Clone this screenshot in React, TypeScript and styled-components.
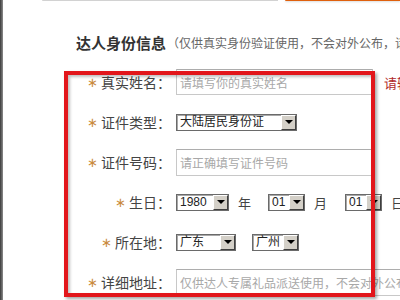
import React from 'react';
import styled, { createGlobalStyle } from 'styled-components';

const Global = createGlobalStyle`
  html, body { margin: 0; padding: 0; background: #fff; }
  body { font-family: "Noto Sans CJK SC", "Noto Sans", sans-serif; }
  #root { width: 400px; height: 300px; overflow: hidden; }
`;

const Page = styled.div`
  position: relative;
  width: 400px;
  height: 300px;
  overflow: hidden;
  display: flex;
  background: #fff;
`;

const LeftEdge = styled.div`
  width: 3px;
  flex: none;
  background: linear-gradient(to right, #3a3a3a, #8c8c8c);
`;

const Main = styled.div`
  flex: 1;
  min-width: 0;
  display: flex;
  flex-direction: column;
`;

const TopBar = styled.div`
  display: flex;
  height: 5px;
  gap: 7px;
  padding-left: 39px;
`;

const GrayTab = styled.div`
  width: 236px;
  box-sizing: border-box;
  background: #eeeeee;
  border-left: 1px solid #dcdcdc;
  border-bottom: 1px solid #d2d2d2;
  border-bottom-left-radius: 4px;
`;

const OrangeTab = styled.div`
  flex: 1;
  background: #df600d;
  border-bottom-left-radius: 6px;
  box-shadow: 0 1px 2px rgba(0, 0, 0, 0.2);
`;

const TitleRow = styled.div`
  margin-top: 31px;
  padding-left: 73px;
  height: 20px;
  display: flex;
  align-items: center;
  white-space: nowrap;
`;

const TitleStrong = styled.span`
  font-size: 15px;
  font-weight: bold;
  color: #333;
`;

const TitleNote = styled.span`
  font-size: 12px;
  color: #666;
  margin-left: 1px;
`;

const Form = styled.div`
  margin-top: 10px;
  display: flex;
  flex-direction: column;
`;

const Row = styled.div`
  height: 40px;
  display: flex;
  align-items: center;
`;

const LabelCell = styled.div`
  width: 168px;
  flex: none;
  display: flex;
  justify-content: flex-end;
  align-items: center;
  font-size: 14px;
  color: #444;
  white-space: nowrap;
`;

const Star = styled.span`
  color: #c98a3c;
  font-family: "DejaVu Sans", sans-serif;
  font-size: 13px;
  margin-right: 3px;
`;

const Field = styled.div`
  margin-left: 5px;
  display: flex;
  align-items: center;
  white-space: nowrap;
`;

const TextInput = styled.input<{ $w: number; $h: number }>`
  box-sizing: border-box;
  width: ${p => p.$w}px;
  height: ${p => p.$h}px;
  flex: none;
  margin: 0;
  border: 1px solid #c8c8c8;
  border-top-color: #adadad;
  padding: 0 3px;
  font-size: 12px;
  font-family: "Noto Sans CJK SC", sans-serif;
  background: #fff;
  outline: none;
  &::placeholder { color: #a8a8a8; }
`;

const Hint = styled.span`
  margin-left: 11px;
  font-size: 13px;
  color: #b02a2a;
`;

const SelectBox = styled.div<{ $w: number }>`
  box-sizing: border-box;
  width: ${p => p.$w}px;
  height: 17px;
  flex: none;
  display: flex;
  border: 1px solid #6a6a6a;
  box-shadow: inset 1px 1px 0 #a8a8a8;
  background: #fff;
`;

const SelectValue = styled.span`
  flex: 1;
  min-width: 0;
  padding-left: 3px;
  font-size: 12px;
  line-height: 15px;
  color: #222;
  font-family: "Liberation Sans", "Noto Sans CJK SC", sans-serif;
  overflow: hidden;
`;

const SelectArrow = styled.span`
  width: 15px;
  flex: none;
  box-sizing: border-box;
  background: #d4d0c8;
  border-top: 1px solid #fff;
  border-left: 1px solid #fff;
  border-right: 1px solid #404040;
  border-bottom: 1px solid #404040;
  display: flex;
  align-items: center;
  justify-content: center;
  &::after {
    content: "";
    border-left: 4px solid transparent;
    border-right: 4px solid transparent;
    border-top: 4px solid #000;
  }
`;

const Unit = styled.span<{ $after: number }>`
  font-size: 13px;
  color: #444;
  margin-left: 9px;
  margin-right: ${p => p.$after}px;
`;

const Spacer = styled.span<{ $w: number }>`
  width: ${p => p.$w}px;
  flex: none;
`;

const Annotation = styled.div`
  position: absolute;
  left: 64px;
  top: 71px;
  width: 311px;
  height: 226px;
  box-sizing: border-box;
  border: 4px solid #e2161b;
  box-shadow: 2px 2px 3px rgba(0, 0, 0, 0.35), inset 2px 2px 3px rgba(0, 0, 0, 0.25);
  pointer-events: none;
`;

const Select = ({ w, value }: { w: number; value: string }) => (
  <SelectBox $w={w}>
    <SelectValue>{value}</SelectValue>
    <SelectArrow />
  </SelectBox>
);

const Label = ({ text }: { text: string }) => (
  <LabelCell>
    <Star>∗</Star>
    {text}：
  </LabelCell>
);

export default function App() {
  return (
    <>
      <Global />
      <Page>
        <LeftEdge />
        <Main>
          <TopBar>
            <GrayTab />
            <OrangeTab />
          </TopBar>
          <TitleRow>
            <TitleStrong>达人身份信息</TitleStrong>
            <TitleNote>（仅供真实身份验证使用，不会对外公布，请放心填写）</TitleNote>
          </TitleRow>
          <Form>
            <Row>
              <Label text="真实姓名" />
              <Field>
                <TextInput $w={197} $h={26} placeholder="请填写你的真实姓名" />
                <Hint>请输入真实姓名</Hint>
              </Field>
            </Row>
            <Row>
              <Label text="证件类型" />
              <Field>
                <Select w={121} value="大陆居民身份证" />
              </Field>
            </Row>
            <Row>
              <Label text="证件号码" />
              <Field>
                <TextInput $w={197} $h={27} placeholder="请正确填写证件号码" />
              </Field>
            </Row>
            <Row>
              <Label text="生日" />
              <Field>
                <Select w={53} value="1980" />
                <Unit $after={17}>年</Unit>
                <Select w={37} value="01" />
                <Unit $after={18}>月</Unit>
                <Select w={37} value="01" />
                <Unit $after={0}>日</Unit>
              </Field>
            </Row>
            <Row>
              <Label text="所在地" />
              <Field>
                <Select w={60} value="广东" />
                <Spacer $w={16} />
                <Select w={47} value="广州" />
              </Field>
            </Row>
            <Row>
              <Label text="详细地址" />
              <Field>
                <TextInput $w={300} $h={27} placeholder="仅供达人专属礼品派送使用，不会对外公布" />
              </Field>
            </Row>
          </Form>
        </Main>
        <Annotation />
      </Page>
    </>
  );
}
